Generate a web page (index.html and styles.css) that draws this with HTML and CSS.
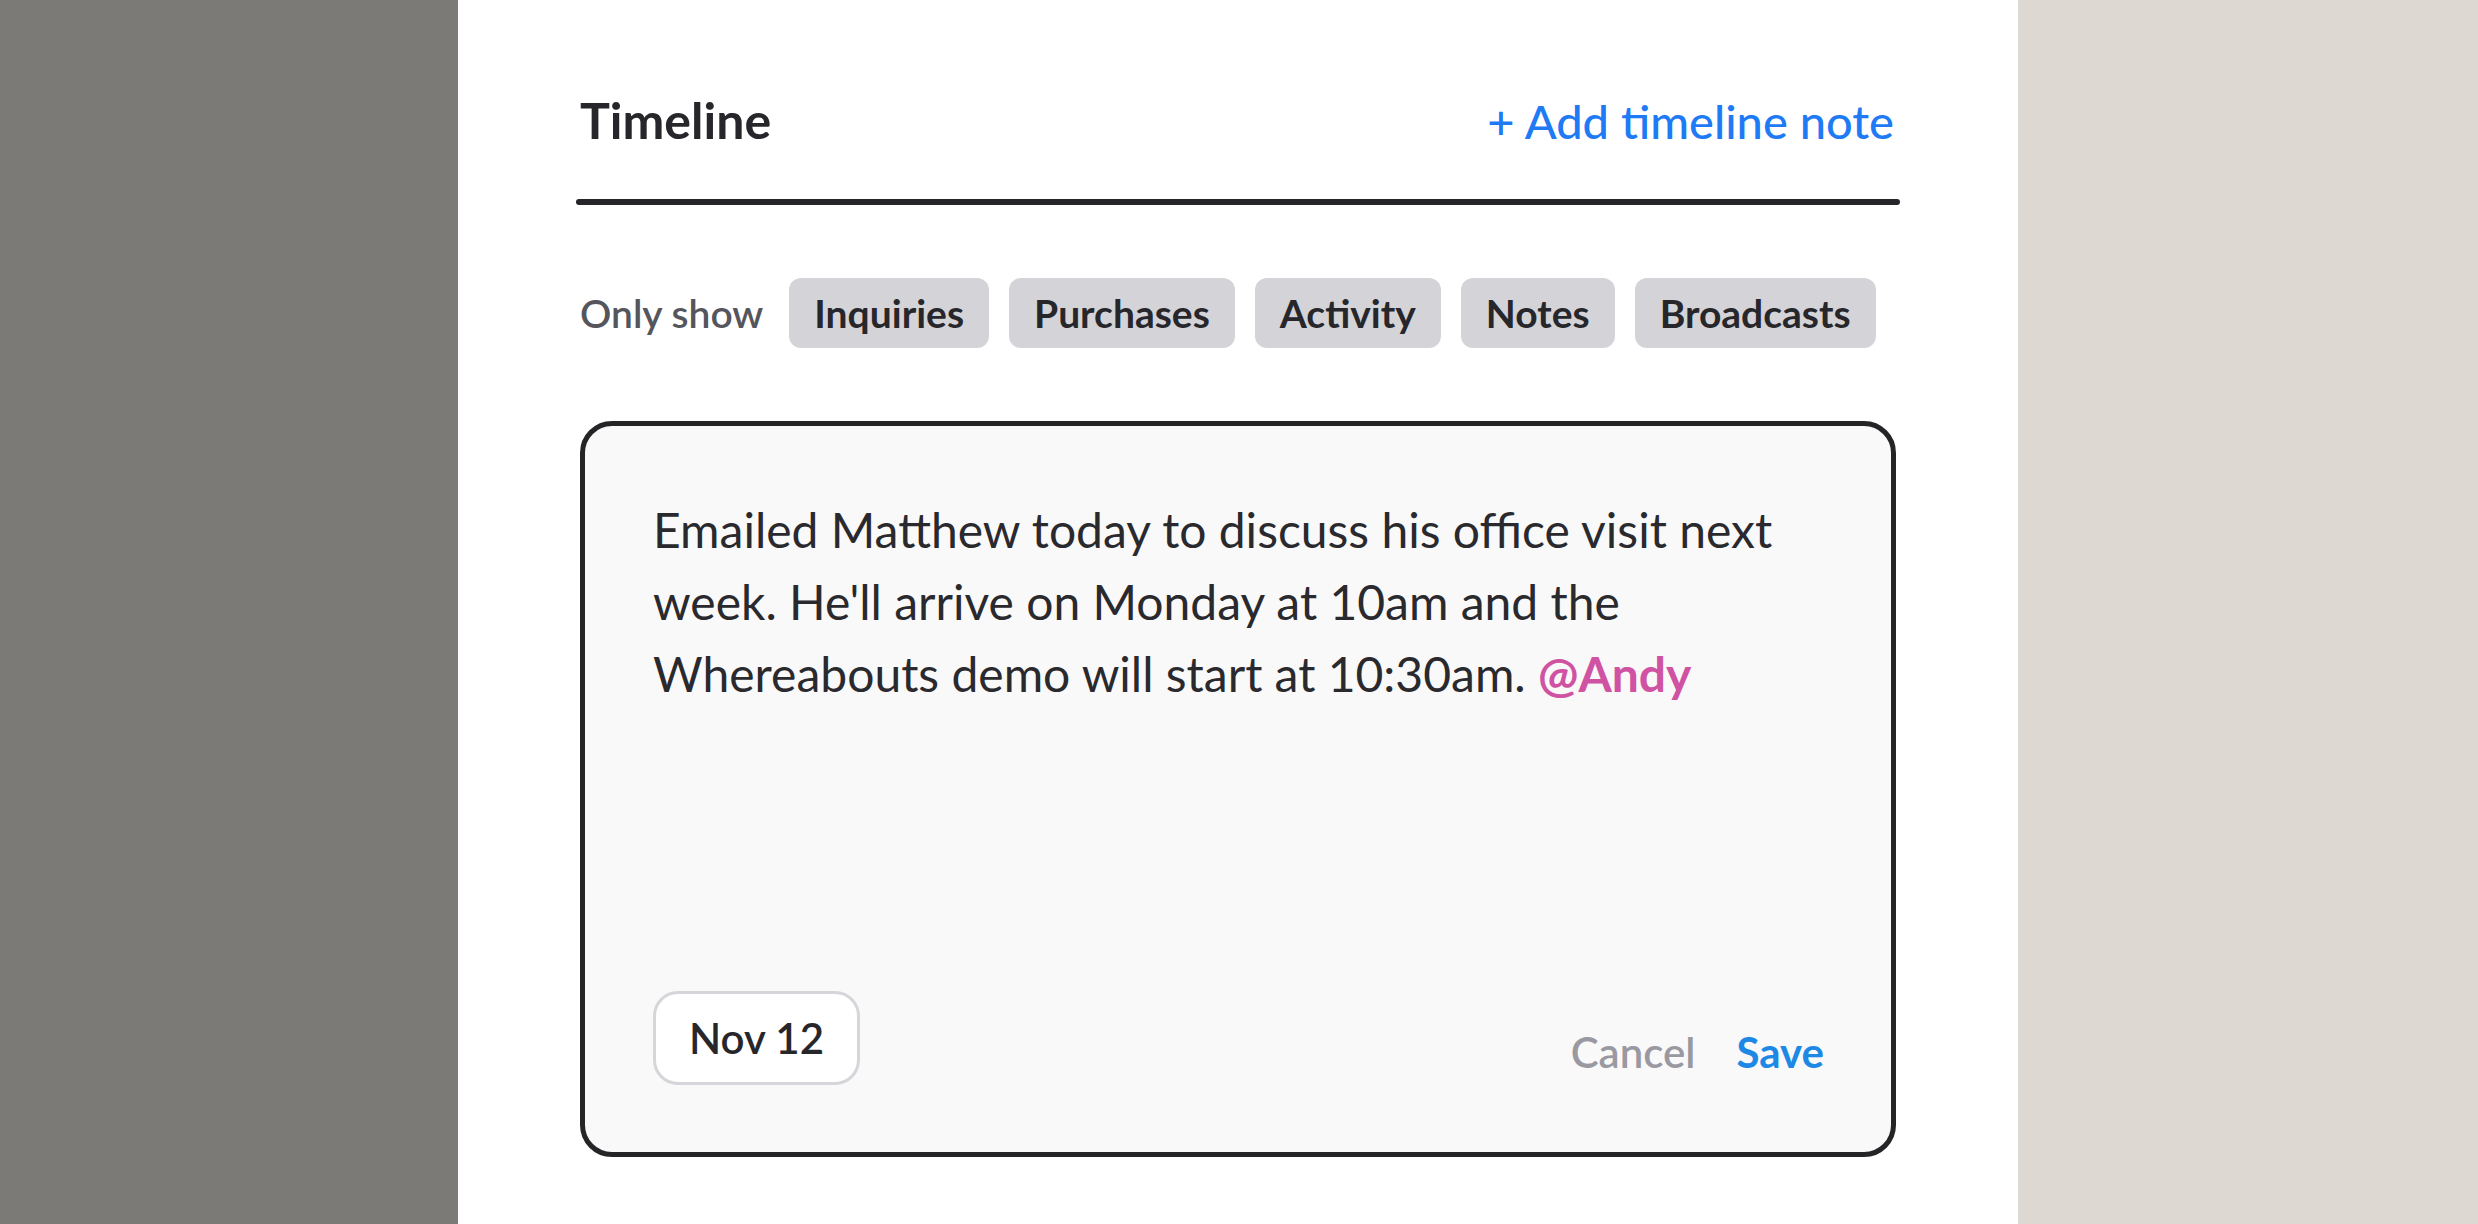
FILE: index.html
```html
<!DOCTYPE html>
<html lang="en">
<head>
<meta charset="utf-8">
<title>Timeline</title>
<link rel="stylesheet" href="styles.css">
</head>
<body>
<div class="page">
  <aside class="side side-left"></aside>
  <main class="main">
    <div class="content">
      <header class="header">
        <h1 class="title">Timeline</h1>
        <a class="add-link" href="#">+ Add timeline note</a>
      </header>
      <div class="rule"></div>
      <div class="filters">
        <span class="filters-label">Only show</span>
        <button class="chip">Inquiries</button>
        <button class="chip">Purchases</button>
        <button class="chip">Activity</button>
        <button class="chip">Notes</button>
        <button class="chip">Broadcasts</button>
      </div>
      <section class="card">
        <p class="note-text">Emailed Matthew today to discuss his office visit next week. He'll arrive on Monday at 10am and the Whereabouts demo will start at 10:30am. <b class="mention">@Andy</b></p>
        <div class="card-footer">
          <button class="date-btn">Nov 12</button>
          <div class="actions">
            <button class="btn-cancel">Cancel</button>
            <button class="btn-save">Save</button>
          </div>
        </div>
      </section>
    </div>
  </main>
  <aside class="side side-right"></aside>
</div>
</body>
</html>
```
FILE: styles.css
```css
* { box-sizing: border-box; }
html, body { margin: 0; padding: 0; }
body {
  font-family: "Lato", "Noto Sans", sans-serif;
  color: #27272b;
  background: #ffffff;
}
.page {
  display: flex;
  height: 1224px;
  overflow: hidden;
}
.side-left { width: 458px; flex: none; background: #7b7a76; }
.side-right { width: 460px; flex: none; background: #ddd8d2; }
.main { flex: 1; background: #ffffff; }
.content {
  padding: 0 118px;
}
.header {
  padding-top: 90px;
  display: flex;
  justify-content: space-between;
  align-items: baseline;
  margin-bottom: 48px;
}
.title {
  margin: 0;
  font-size: 50px;
  line-height: 60px;
  font-weight: 700;
  color: #27272b;
  padding-left: 4px;
}
.add-link {
  font-size: 47px;
  line-height: 60px;
  font-weight: 500;
  color: #1f7af5;
  text-decoration: none;
  padding-right: 6px;
}
.rule {
  height: 6px;
  border-radius: 3px;
  background: #26262a;
}
.filters {
  margin-top: 73px;
  display: flex;
  align-items: center;
  gap: 20px;
  padding-left: 4px;
}
.filters-label {
  font-size: 39px;
  font-weight: 600;
  color: #55555d;
  margin-right: 6px;
}
.chip {
  height: 70px;
  padding: 0 25px;
  border: none;
  border-radius: 12px;
  background: #d4d3d8;
  color: #27272b;
  font-family: inherit;
  font-size: 39px;
  font-weight: 700;
}
.card {
  margin: 73px 4px 0;
  border: 5px solid #252528;
  border-radius: 32px;
  background: #f9f9f9;
  padding: 68px 67px 67px 68px;
}
.note-text {
  margin: 0;
  font-size: 48px;
  line-height: 72px;
  color: #2a2a2e;
  min-height: 497px;
}
.mention {
  color: #d053a3;
  font-weight: 700;
}
.card-footer {
  display: flex;
  justify-content: space-between;
  align-items: flex-end;
}
.date-btn {
  background: #ffffff;
  border: 3px solid #d5d5da;
  border-radius: 25px;
  padding: 19px 33px;
  font-family: inherit;
  font-size: 42px;
  line-height: 50px;
  font-weight: 600;
  color: #27272b;
}
.actions {
  display: flex;
  gap: 41px;
  padding-bottom: 8px;
}
.btn-cancel, .btn-save {
  border: none;
  background: none;
  padding: 0;
  font-family: inherit;
  font-size: 42px;
  line-height: 50px;
  font-weight: 600;
}
.btn-cancel { color: #9a99a2; }
.btn-save { color: #1e88e5; font-weight: 700; }
```
